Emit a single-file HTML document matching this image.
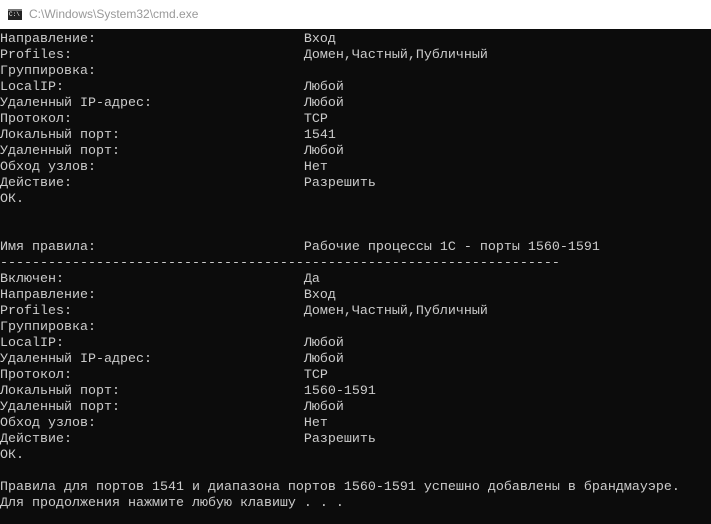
<!DOCTYPE html><html><head><meta charset="utf-8"><style>
html,body{margin:0;padding:0;width:711px;height:524px;overflow:hidden;background:#0c0c0c}
.t{height:29px;background:#fff;position:relative;font-family:"Liberation Sans",sans-serif;font-size:12px;color:#999}
.t span{position:absolute;left:29px;top:7px}
.ic{position:absolute;left:8px;top:9px;width:14px;height:11px;background:#222;border-top:2px solid #777;box-sizing:border-box}
.ic:after{content:"C:\\";color:#fff;font-size:6px;position:absolute;left:1px;top:0px;font-family:"Liberation Mono",monospace}
pre{margin:0;padding:3px 0 0 0;font-family:"Liberation Mono","DejaVu Sans Mono",monospace;font-size:13.33px;line-height:16px;color:#cccccc;white-space:pre}
</style></head><body>
<div class="t"><div class="ic"></div><span>C:\Windows\System32\cmd.exe</span></div>
<pre>Направление:                          Вход
Profiles:                             Домен,Частный,Публичный
Группировка:
LocalIP:                              Любой
Удаленный IP-адрес:                   Любой
Протокол:                             TCP
Локальный порт:                       1541
Удаленный порт:                       Любой
Обход узлов:                          Нет
Действие:                             Разрешить
ОК.


Имя правила:                          Рабочие процессы 1С - порты 1560-1591
----------------------------------------------------------------------
Включен:                              Да
Направление:                          Вход
Profiles:                             Домен,Частный,Публичный
Группировка:
LocalIP:                              Любой
Удаленный IP-адрес:                   Любой
Протокол:                             TCP
Локальный порт:                       1560-1591
Удаленный порт:                       Любой
Обход узлов:                          Нет
Действие:                             Разрешить
ОК.

Правила для портов 1541 и диапазона портов 1560-1591 успешно добавлены в брандмауэре.
Для продолжения нажмите любую клавишу . . .</pre>
</body></html>
